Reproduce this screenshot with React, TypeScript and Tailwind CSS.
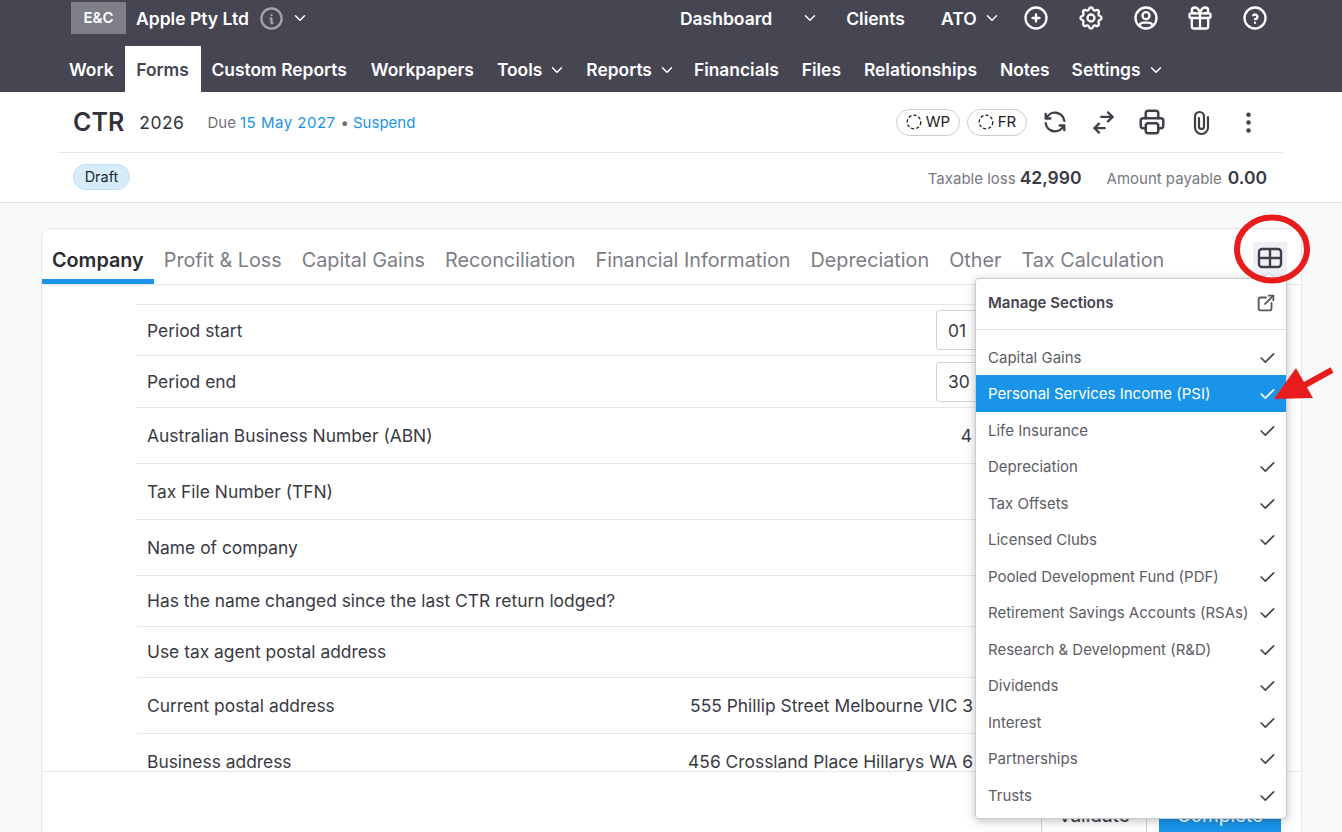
import {
  TbCheck,
  TbChevronDown,
  TbCirclePlus,
  TbDotsVertical,
  TbExternalLink,
  TbGift,
  TbHelpCircle,
  TbInfoCircle,
  TbPrinter,
  TbRefresh,
  TbSettings,
  TbSwitchHorizontal,
  TbUserCircle,
} from "react-icons/tb";

const NAV = [
  { name: "Custom Reports", mr: "mr-[24px]" },
  { name: "Workpapers", mr: "mr-[23px]" },
  { name: "Tools", caret: true, mr: "mr-[20px]" },
  { name: "Reports", caret: true, mr: "mr-[18px]" },
  { name: "Financials", mr: "mr-[23px]" },
  { name: "Files", mr: "mr-[23px]" },
  { name: "Relationships", mr: "mr-[23px]" },
  { name: "Notes", mr: "mr-[22px]" },
  { name: "Settings", caret: true, mr: "mr-[20px]" },
];

const TABS = ["Profit & Loss", "Capital Gains", "Reconciliation", "Financial Information", "Depreciation", "Other", "Tax Calculation"];

const SECTIONS = [
  "Capital Gains",
  "Personal Services Income (PSI)",
  "Life Insurance",
  "Depreciation",
  "Tax Offsets",
  "Licensed Clubs",
  "Pooled Development Fund (PDF)",
  "Retirement Savings Accounts (RSAs)",
  "Research & Development (R&D)",
  "Dividends",
  "Interest",
  "Partnerships",
  "Trusts",
];

function Row({ label, h, lift, children }: { label: string; h: string; lift?: boolean; children?: React.ReactNode }) {
  return (
    <div className={`flex items-center justify-between border-b border-[#e5e7eb] pl-[10px] text-[17.4px] text-[#3a3a44] ${h}`}>
      <span className={lift ? "" : "pt-[2px]"}>{label}</span>
      {children}
    </div>
  );
}

function DateBox({ value }: { value: string }) {
  return (
    <div className="mr-[50px] flex h-[40px] w-[300px] items-center rounded-[3px] border border-[#d1d5db] pl-[11px] pt-[2px] text-[#3a3a44]">
      {value}
    </div>
  );
}

function Badge({ label, w }: { label: string; w: string }) {
  return (
    <div className={`flex h-[27px] items-center justify-center gap-[4px] rounded-full border border-[#c9ccd3] text-[15px] text-[#222] ${w}`}>
      <svg width="16" height="16" viewBox="0 0 16 16" fill="none" stroke="#222" strokeWidth="1.3" strokeDasharray="3.2 2">
        <circle cx="8" cy="8" r="6.8" />
      </svg>
      {label}
    </div>
  );
}

export default function App() {
  return (
    <div className="relative h-[832px] w-[1342px] overflow-hidden bg-[#f8f9fb] font-['Inter',sans-serif]">
      <header className="h-[92px] bg-[#464552] text-white">
        <div className="flex h-[46px] items-center pb-[10px] pl-[71px] text-[17.5px] font-semibold">
          <div className="flex h-[32px] w-[55px] items-center justify-center bg-[#7f7f8a] text-[15px]">E&amp;C</div>
          <span className="ml-[10px] mt-[2px]">Apple Pty Ltd</span>
          <TbInfoCircle className="ml-[9px] text-[#a3a3ad]" size={27} />
          <TbChevronDown className="ml-[6px]" size={18} />
          <span className="ml-[371px] mt-[2px]">Dashboard</span>
          <TbChevronDown className="ml-[29px]" size={18} />
          <span className="ml-[27px] mt-[2px]">Clients</span>
          <span className="ml-[36px] mt-[2px]">ATO</span>
          <TbChevronDown className="ml-[6px]" size={18} />
          <TbCirclePlus className="ml-[21px]" size={28} />
          <TbSettings className="ml-[27px]" size={28} />
          <TbUserCircle className="ml-[27px]" size={28} />
          <TbGift className="ml-[26px]" size={28} />
          <TbHelpCircle className="ml-[27px]" size={28} />
        </div>
        <nav className="flex h-[46px] items-center pl-[69px] pt-[2px] text-[17.4px] font-semibold">
          <span>Work</span>
          <span className="ml-[11px] mr-[11px] -mt-[2px] flex h-[46px] w-[76px] items-center justify-center bg-white pt-[2px] text-[#464552]">Forms</span>
          {NAV.map((item) => (
            <span key={item.name} className={`flex items-center ${item.mr}`}>
              {item.name}
              {item.caret && <TbChevronDown className="ml-[6px]" size={18} />}
            </span>
          ))}
        </nav>
      </header>

      <section className="h-[111px] border-b border-[#e0e2e6] bg-white">
        <div className="ml-[58px] mr-[59px] flex h-[61px] items-center justify-between border-b border-[#e5e7eb] pl-[15px] pr-[21.5px]">
          <div className="flex items-center pt-[2px]">
            <span className="text-[25px] font-semibold text-[#33333b]">CTR</span>
            <span className="ml-[15px] text-[17.5px] tracking-[0.5px] text-[#33333b]">2026</span>
            <span className="ml-[23px] text-[15px] text-[#6f6f78]">Due</span>
            <span className="ml-[4px] text-[15px] tracking-[0.5px] text-[#1a94e8]">15 May 2027</span>
            <span className="ml-[5px] text-[15px] text-[#6f6f78]">•</span>
            <span className="ml-[4px] text-[15px] text-[#1a94e8]">Suspend</span>
          </div>
          <div className="flex items-center text-[#3f3f48]">
            <Badge label="WP" w="w-[64px]" />
            <div className="w-[7px]" />
            <Badge label="FR" w="w-[60px]" />
            <TbRefresh className="ml-[14px]" size={28} />
            <TbSwitchHorizontal className="ml-[20.5px]" size={27} />
            <TbPrinter className="ml-[20.5px]" size={30} />
            {/* upright paperclip */}
            <svg className="ml-[20.5px]" width="27" height="27" viewBox="0 0 27 27" fill="none" stroke="currentColor" strokeWidth="2.2" strokeLinecap="round">
              <path d="M20 8V18.5A6.5 6.5 0 0 1 7 18.5V7.5A4.5 4.5 0 0 1 16 7.5V17.5A2.5 2.5 0 0 1 11 17.5V9" />
            </svg>
            <TbDotsVertical className="ml-[20px]" size={27} />
          </div>
        </div>
        <div className="ml-[58px] mr-[59px] flex h-[49px] items-start justify-between pl-[15px] pr-[16px] pt-[11px]">
          <span className="flex h-[26px] w-[57px] items-center justify-center rounded-full border border-[#bfe0f8] bg-[#d6ecfb] text-[14.5px] text-[#26262c]">Draft</span>
          <div className="flex items-baseline pt-[1px] text-[15px] text-[#77777f]">
            <span>Taxable loss</span>
            <span className="ml-[4px] text-[17.5px] font-semibold text-[#3a3a44]">42,990</span>
            <span className="ml-[25px]">Amount payable</span>
            <span className="ml-[6px] text-[17.5px] font-semibold text-[#3a3a44]">0.00</span>
          </div>
        </div>
      </section>

      <main className="ml-[41px] mt-[25px] h-[640px] w-[1261px] rounded-t-[10px] border border-[#e5e7eb] bg-white">
        <div className="flex h-[56px] items-end border-b border-[#e5e7eb]">
          <span className="flex h-[37px] items-start border-b-[5px] border-[#1a94e8] px-[10px] pt-[1px] text-[19.8px] font-semibold leading-[24px] text-[#2b2b33]">Company</span>
          {TABS.map((t) => (
            <span key={t} className="flex h-[37px] items-start px-[10px] pt-[1px] text-[19.8px] leading-[24px] text-[#7d7d86]">{t}</span>
          ))}
          <div className="mb-[6px] ml-auto mr-[14px] flex h-[36px] w-[34px] items-center justify-center bg-[#eef0f5] pb-[4px]">
            <svg width="26" height="22" viewBox="0 0 26 22" fill="none" stroke="#3f3f48" strokeWidth="2.4">
              <rect x="2" y="2" width="22" height="18" rx="3" />
              <path d="M2 11H24M13 2V20" />
            </svg>
          </div>
        </div>
        <div className="h-[486px] overflow-hidden pt-[19px]">
          <div className="ml-[95px] mr-[15px] border-t border-[#e5e7eb]">
            <Row label="Period start" h="h-[51px]"><DateBox value="01" /></Row>
            <Row label="Period end" h="h-[52px]"><DateBox value="30" /></Row>
            <Row label="Australian Business Number (ABN)" h="h-[56px]"><span className="mr-[314px] pt-[2px]">4</span></Row>
            <Row label="Tax File Number (TFN)" h="h-[56px]" />
            <Row label="Name of company" h="h-[56px]" />
            <Row label="Has the name changed since the last CTR return lodged?" h="h-[51px]" lift />
            <Row label="Use tax agent postal address" h="h-[51px]" lift />
            <Row label="Current postal address" h="h-[56px]"><span className="mr-[313px] pt-[2px]">555 Phillip Street Melbourne VIC 3</span></Row>
            <Row label="Business address" h="h-[56px]"><span className="mr-[313px] pt-[2px]">456 Crossland Place Hillarys WA 6</span></Row>
          </div>
        </div>
        <div className="flex justify-end gap-[12px] border-t border-[#e5e7eb] pr-[20px] pt-[24px]">
          <div className="flex h-[40px] w-[106px] items-center justify-center border border-[#d1d5db] text-[19px] text-[#3a3a44]">Validate</div>
          <div className="flex h-[40px] w-[122px] items-center justify-center bg-[#1a94e8] text-[19px] text-white">Complete</div>
        </div>
      </main>

      {/* sections popover */}
      <div className="absolute left-[975px] top-[278px] w-[312px] rounded-[4px] border border-[#c9ccd3] bg-white shadow-[0_2px_10px_rgba(0,0,0,0.25)]">
        <div className="absolute -top-[5px] left-[288px] h-[9px] w-[9px] rotate-45 border-l border-t border-[#c9ccd3] bg-white" />
        <div className="flex h-[51px] items-center justify-between border-b border-[#dfe1e6] pb-[2px] pl-[12px] pr-[9px] text-[15px] font-semibold text-[#45454e]">
          Manage Sections
          <TbExternalLink className="text-[#55555e]" size={22} />
        </div>
        <div className="pb-[5px] pt-[8.5px]">
          {SECTIONS.map((s, i) => (
            <div
              key={s}
              className={`flex h-[36.5px] items-center justify-between pl-[12px] pr-[9px] pt-[2px] text-[15px] ${
                i === 1 ? "bg-[#1a94e8] text-white" : "text-[#5c5c65]"
              }`}
            >
              {s}
              <TbCheck className={i === 1 ? "text-white" : "text-[#45454e]"} size={20} />
            </div>
          ))}
        </div>
      </div>

      {/* red annotations */}
      <svg className="absolute left-[1225px] top-[205px]" width="117" height="205" viewBox="0 0 117 205" fill="none">
        <ellipse cx="47" cy="44" rx="35" ry="31.5" stroke="#e81c1c" strokeWidth="6" />
        <path d="M107 165L78 181" stroke="#e81c1c" strokeWidth="6" />
        <path d="M49 194L71 163L88 193Z" fill="#e81c1c" />
      </svg>
    </div>
  );
}
